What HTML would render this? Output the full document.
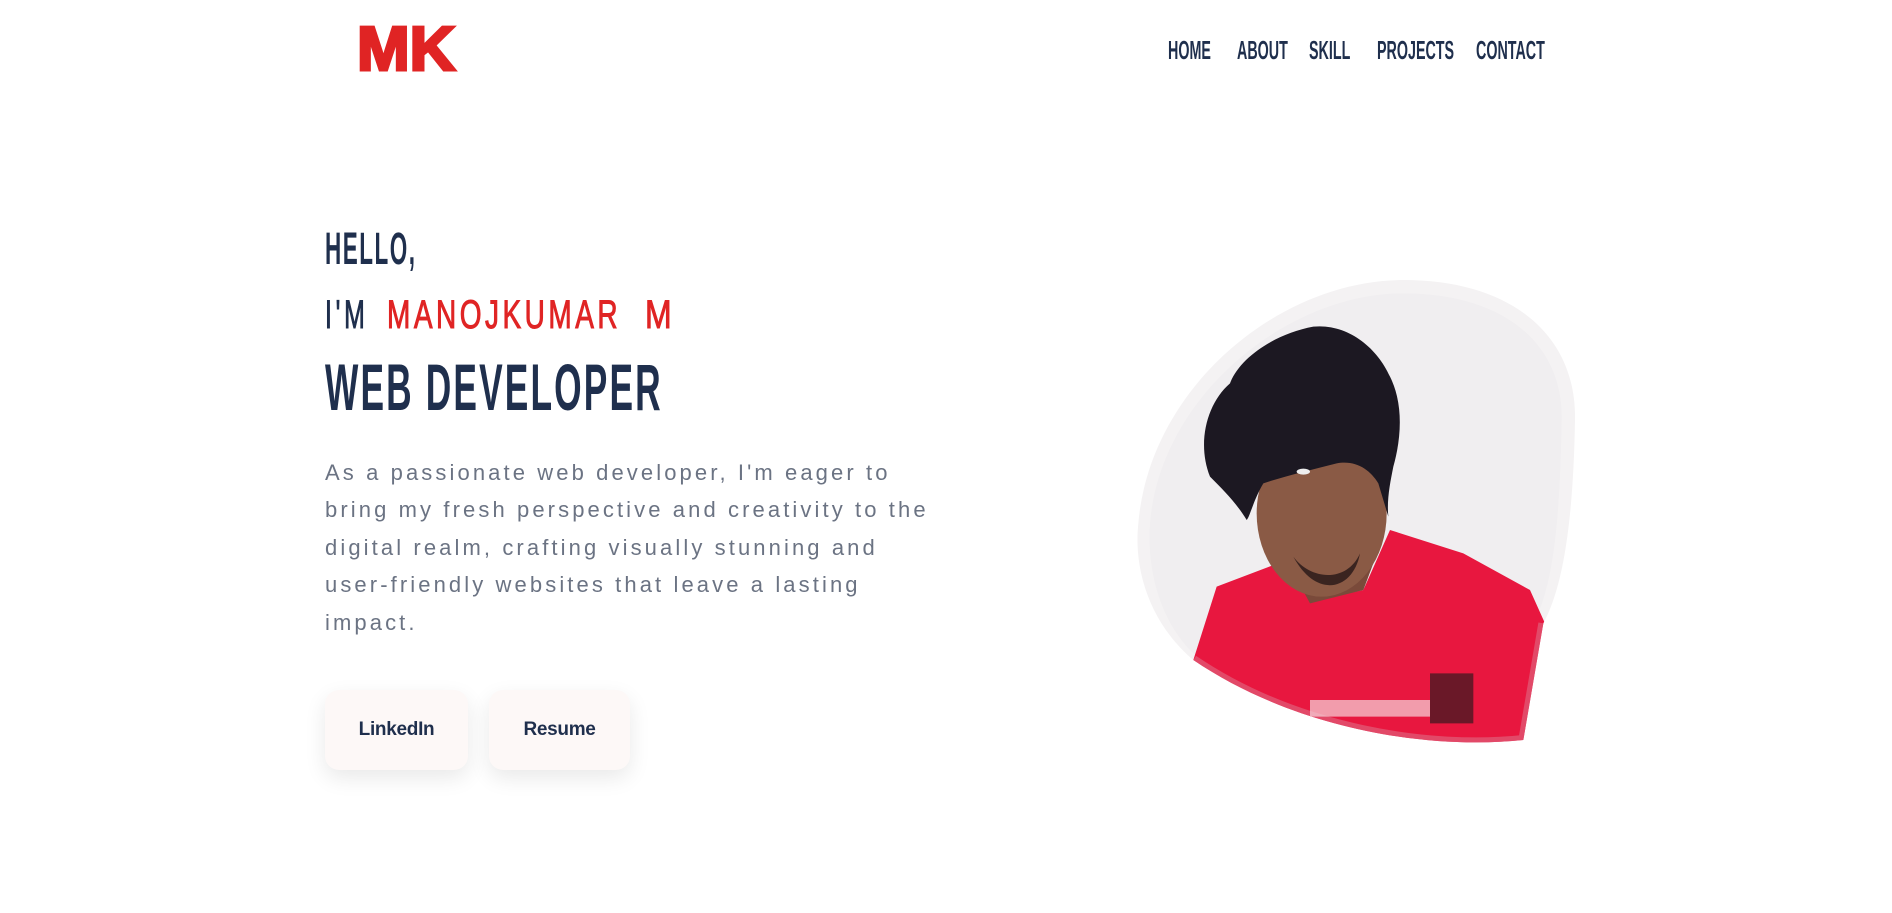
<!DOCTYPE html>
<html><head><meta charset="utf-8"><style>
*{margin:0;padding:0;box-sizing:border-box}
body{width:1892px;height:913px;background:#fff;position:relative;overflow:hidden;font-family:"Liberation Sans",sans-serif}
.a{position:absolute;white-space:nowrap;transform-origin:0 0}
.nav{font-weight:bold;font-size:26px;line-height:26px;color:#1f2f4d;top:37px;transform:scaleX(.55)}
.btn{position:absolute;top:690px;height:80px;background:#fdf8f7;border-radius:14px;box-shadow:0 8px 22px rgba(0,0,0,.09);font-weight:bold;font-size:19px;color:#1f2f4d;display:flex;align-items:center;justify-content:center;letter-spacing:-.3px}
</style></head><body>
<div class="a" style="left:357px;top:19px;font-size:62px;line-height:62px;font-weight:bold;color:#e02424;-webkit-text-stroke:3px #e02424;transform:scaleX(1.02)">MK</div>
<div class="a nav" style="left:1168px">HOME</div>
<div class="a nav" style="left:1237px">ABOUT</div>
<div class="a nav" style="left:1309px">SKILL</div>
<div class="a nav" style="left:1377px">PROJECTS</div>
<div class="a nav" style="left:1476px">CONTACT</div>

<div class="a" style="left:325px;top:226px;font-size:45px;line-height:45px;font-weight:bold;color:#1f2f4d;letter-spacing:3px;transform:scaleX(.5)">HELLO,</div>
<div class="a" style="left:325px;top:295px;font-size:40px;line-height:40px;color:#1f2f4d;letter-spacing:6px;-webkit-text-stroke:1px #1f2f4d;transform:scaleX(.62)">I'M</div>
<div class="a" style="left:387px;top:295px;font-size:40px;line-height:40px;color:#e02424;letter-spacing:5px;-webkit-text-stroke:1px #e02424;transform:scaleX(.7)">MANOJKUMAR</div>
<div class="a" style="left:645px;top:295px;font-size:40px;line-height:40px;color:#e02424;-webkit-text-stroke:1px #e02424;transform:scaleX(.8)">M</div>
<div class="a" style="left:325px;top:354px;font-size:66px;line-height:66px;font-weight:bold;color:#1f2f4d;letter-spacing:4px;transform:scaleX(.535)">WEB DEVELOPER</div>

<div class="a" style="left:325px;top:454px;font-size:22px;line-height:37.4px;color:#6b7383;letter-spacing:3.1px">As a passionate web developer, I'm eager to<br>bring my fresh perspective and creativity to the<br>digital realm, crafting visually stunning and<br>user-friendly websites that leave a lasting<br>impact.</div>

<div class="btn" style="left:325px;width:143px">LinkedIn</div>
<div class="btn" style="left:489px;width:141px">Resume</div>

<svg style="position:absolute;left:1130px;top:270px" width="460" height="480" viewBox="0 0 1380 1440">
<defs><clipPath id="c"><path d="M820,30 C1150,30 1340,200 1335,450 C1330,750 1300,950 1240,1060 L1180,1410 C900,1440 500,1380 190,1170 C60,1060 10,900 25,760 C60,350 450,30 820,30 Z"/></clipPath></defs>
<path d="M820,30 C1150,30 1340,200 1335,450 C1330,750 1300,950 1240,1060 L1180,1410 C900,1440 500,1380 190,1170 C60,1060 10,900 25,760 C60,350 450,30 820,30 Z" fill="#f4f2f3"/>
<g clip-path="url(#c)">
<path d="M820,70 C1120,70 1300,220 1295,450 C1290,750 1270,950 1210,1060 L1150,1390 C900,1410 500,1360 200,1160 C90,1060 50,900 60,760 C90,380 470,70 820,70 Z" fill="#f0eef0"/>
<path d="M190,1170 L260,950 L470,870 L560,990 L700,960 L780,780 L1000,850 L1200,960 L1245,1060 L1180,1430 L150,1430 Z" fill="#e8173f"/>
<path d="M190,1170 C500,1380 900,1440 1180,1410 L1240,1060" fill="none" stroke="#e0607a" stroke-width="30" opacity=".7"/>
<path d="M540,1290 L900,1290 L900,1340 L540,1340 Z" fill="#f7d5dc" opacity=".7"/>
<path d="M900,1210 L1030,1210 L1030,1360 L900,1360 Z" fill="#6a1828"/>
<path d="M470,870 L540,1000 L700,960 L760,800 L700,760 L520,820 Z" fill="#7a4a3a"/>
<ellipse cx="575" cy="730" rx="195" ry="250" fill="#8a5a45"/>
<path d="M240,620 C200,520 230,400 300,340 C330,260 440,190 550,170 C650,160 740,230 780,320 C820,400 815,500 790,590 C780,640 770,690 775,740 L745,640 C720,600 680,570 620,580 C540,600 460,620 400,640 C370,690 360,740 350,750 C320,700 280,660 240,620 Z" fill="#1c1822"/>
<ellipse cx="520" cy="605" rx="20" ry="9" fill="#eee"/>
<path d="M490,860 C540,930 650,940 690,850 C670,960 560,990 490,860 Z" fill="#3a2420"/>
</g>
</svg>
</body></html>
